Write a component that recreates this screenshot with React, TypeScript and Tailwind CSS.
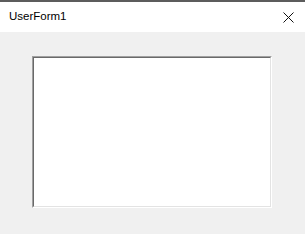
export default function App() {
  return (
    <div className="flex h-[234px] w-[305px] flex-col bg-[#f0f0f0] font-['Liberation_Sans',Arial,sans-serif]">
      <div className="flex h-[32px] shrink-0 items-center justify-between border-t-2 border-[#5c5c5c] bg-white pl-[9px] pr-[11px]">
        <span className="text-[11.5px] leading-none text-black">UserForm1</span>
        <svg width="11" height="11" viewBox="0 0 11 11">
          <path d="M0.5 0.5L10.5 10.5M10.5 0.5L0.5 10.5" stroke="#111" strokeWidth="1" />
        </svg>
      </div>
      <div className="pl-[32px] pt-[24px]">
        <div className="h-[152px] w-[240px] border border-b-white border-l-[#a0a0a0] border-r-white border-t-[#a0a0a0]">
          <div className="h-full w-full border border-b-[#e3e3e3] border-l-[#696969] border-r-[#e3e3e3] border-t-[#696969] bg-white" />
        </div>
      </div>
    </div>
  );
}
